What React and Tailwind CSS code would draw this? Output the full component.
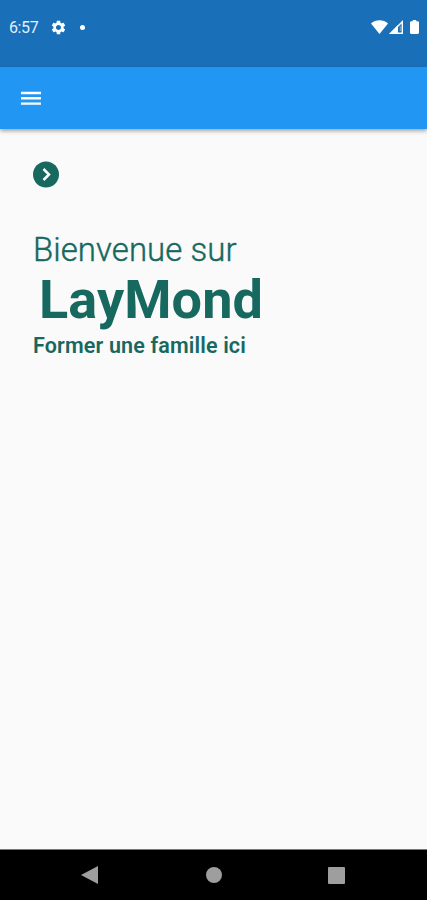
import { MdSettings } from "react-icons/md";

function StatusBar() {
  return (
    <div className="flex h-[67px] items-start justify-between bg-[#1a70b8] pl-[9px] pr-[8px] pt-[17px] text-white">
      <div className="flex h-5 items-center">
        <span className="w-[41px] pt-[2px] text-[16px] leading-5 tracking-[-0.4px] text-[#e3eff9]">6:57</span>
        <MdSettings className="h-[17px] w-[17px]" />
        <span className="ml-[13px] h-[5px] w-[5px] rounded-full bg-white" />
      </div>
      <div className="flex h-5 items-center">
        <svg width="17" height="14" viewBox="0 0 17 14" fill="currentColor">
          <path d="M0 3.5C4.7-.8 12.3-.8 17 3.5L8.5 14Z" />
        </svg>
        <svg className="ml-px" width="15" height="14" viewBox="0 0 15 14" fill="none" stroke="currentColor">
          <path d="M1.8 13.2H13.3V1.8Z" strokeWidth="1.4" />
          <path d="M0 14L9 5V14Z" fill="currentColor" stroke="none" />
          <path d="M11.3 6V11" strokeWidth="1" opacity="0.4" />
        </svg>
        <svg className="ml-[6px]" width="9" height="14" viewBox="0 0 9 14" fill="currentColor">
          <path d="M3 0H6L6.5 1.2H8L9 2V13L8 14H1L0 13V2L1 1.2H2.5Z" />
        </svg>
      </div>
    </div>
  );
}

function AppBar() {
  return (
    <header className="flex h-[62px] items-center bg-[#2196f3] pl-[21px] text-white shadow-[0_2px_4px_rgba(0,0,0,0.35)]">
      <svg width="20" height="14" viewBox="0 0 20 14" stroke="currentColor" strokeWidth="2.4">
        <path d="M0 2H20M0 7.3H20M0 12.6H20" />
      </svg>
    </header>
  );
}

function NavBar() {
  return (
    <nav className="flex h-[51px] items-center border-t border-[#777] bg-black text-[#9e9e9e]">
      <svg className="ml-[81px]" width="17" height="18" viewBox="0 0 17 18" fill="currentColor">
        <path d="M17 0V18L0 9Z" />
      </svg>
      <span className="ml-[108px] h-4 w-4 rounded-full bg-current" />
      <span className="ml-[106px] h-[17px] w-[17px] rounded-[1px] bg-current" />
    </nav>
  );
}

export default function App() {
  return (
    <div className="flex h-[900px] w-[427px] flex-col overflow-hidden bg-[#fafafa] font-['Roboto',sans-serif]">
      <StatusBar />
      <AppBar />
      <main className="flex-1 px-[33px] pt-[32px] text-[#17685f]">
        <svg width="26" height="27" viewBox="0 0 26 27">
          <circle cx="13" cy="13.5" r="13" fill="currentColor" />
          <path d="M10.5 8L16 13.5L10.5 19" fill="none" stroke="white" strokeWidth="2.5" />
        </svg>
        <p className="mt-[42px] text-[33px] font-light leading-10 tracking-[0.05px] [-webkit-text-stroke:0.4px_#17685f]">
          Bienvenue sur
        </p>
        <h1 className="ml-[6px] mt-[2px] text-[54px] font-bold leading-[56px] tracking-[0.1px]">LayMond</h1>
        <p className="mt-[5px] text-[21.5px] font-semibold leading-[26px] tracking-[0.15px]">Former une famille ici</p>
      </main>
      <NavBar />
    </div>
  );
}
